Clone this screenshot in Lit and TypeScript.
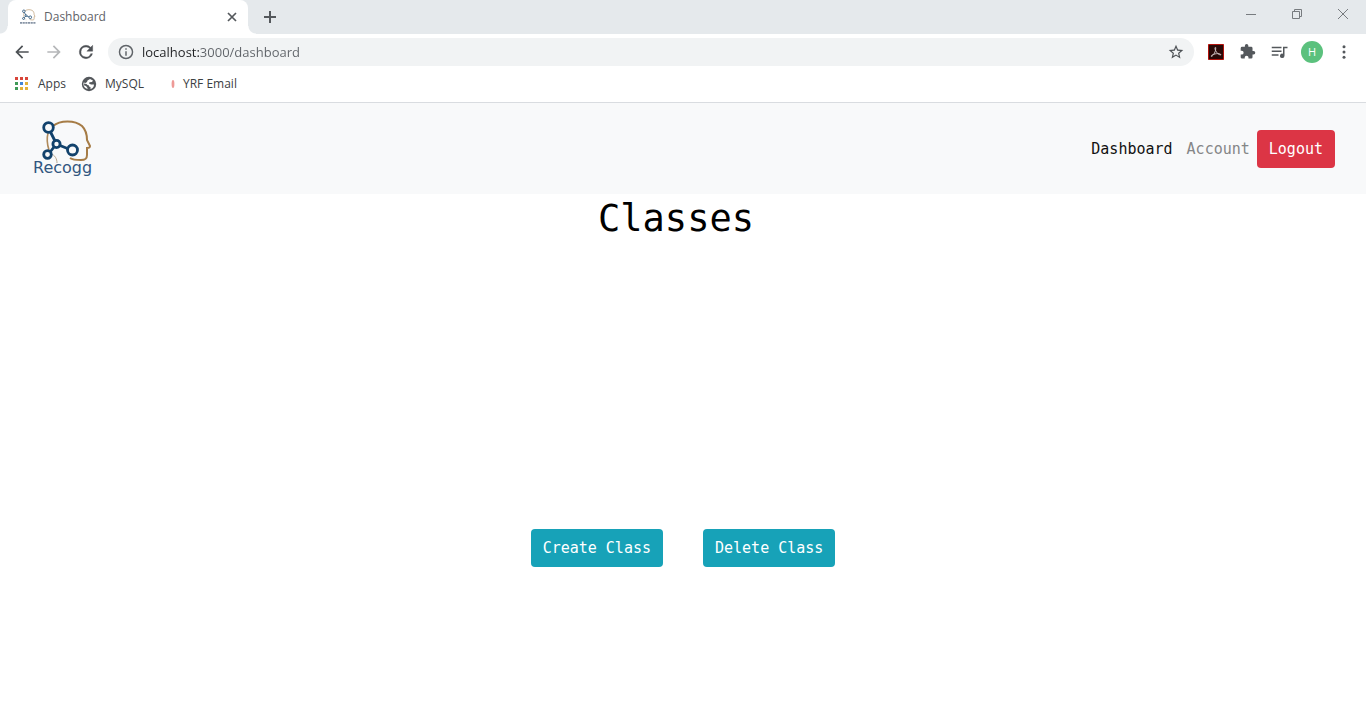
import { LitElement, html, css, svg } from "lit";
import { customElement, state } from "lit/decorators.js";

const mark = svg`
  <path d="M25 5 C32 -1 47 -1 54 5 C58 9 59 14 59 19 L62 25 C62 27 61 27 59 27 L59 34 C59 38 57 39 53 39 C49 39 45 39 42 37" fill="none" stroke="#a67c46" stroke-width="2"/>
  <path d="M20 12 C18.500 18 19 23 21 29" fill="none" stroke="#b08a5a" stroke-width="1.600"/>
  <path d="M23 33 C27 34 29 38 29 42" fill="none" stroke="#b9a68c" stroke-width="1"/>
  <g fill="none" stroke="#12426c" stroke-width="2.800">
    <path d="M22.500 11 L27 20 M32 24.500 L39.500 27.500 M26 26 L22.500 30.500"/>
    <circle cx="20.500" cy="6.500" r="4.800"/>
    <circle cx="28.500" cy="23" r="3.600"/>
    <circle cx="44.500" cy="29" r="5"/>
    <circle cx="19.500" cy="33.500" r="3.800"/>
  </g>`;

@customElement("browser-tabs")
class BrowserTabs extends LitElement {
  static styles = css`
    :host { display: block; }
    .strip { display: flex; align-items: stretch; height: 34px; background: #e5e9ec; padding-left: 8px; }
    .tab { position: relative; box-sizing: border-box; width: 240px; display: flex; align-items: center; gap: 8px; padding: 0 10px 0 12px; background: #fff; border-radius: 8px 8px 0 0; }
    .tab::before, .tab::after { content: ""; position: absolute; bottom: 0; width: 8px; height: 8px; }
    .tab::before { left: -8px; background: radial-gradient(circle at 0 0, #e5e9ec 7px, #fff 8px); }
    .tab::after { right: -8px; background: radial-gradient(circle at 100% 0, #e5e9ec 7px, #fff 8px); }
    .title { flex: 1; font: 12px/16px "Open Sans", sans-serif; color: #5f6368; }
    button { border: 0; padding: 0; background: none; display: grid; place-items: center; }
    svg { display: block; }
    .close { width: 12px; height: 12px; }
    .new { width: 44px; }
    .window { margin-left: auto; display: flex; height: 28px; }
    .window button { width: 46px; }
  `;

  render() {
    return html`
      <div class="strip">
        <div class="tab">
          <svg width="16" height="16" viewBox="6 -2 60 60" aria-hidden="true">${mark}
            <path d="M6 50 H66" stroke="#8794a5" stroke-width="7" stroke-dasharray="8 2"/>
          </svg>
          <span class="title">Dashboard</span>
          <button class="close" aria-label="Close tab">
            <svg width="12" height="12" viewBox="0 0 12 12"><path d="M2 2 L10 10 M10 2 L2 10" stroke="#54585c" stroke-width="1.700"/></svg>
          </button>
        </div>
        <button class="new" aria-label="New tab">
          <svg width="12" height="12" viewBox="0 0 12 12"><path d="M6 0 V12 M0 6 H12" stroke="#54585c" stroke-width="2"/></svg>
        </button>
        <div class="window">
          <button aria-label="Minimize"><svg width="10" height="10"><path d="M0 5.500 H10" stroke="#777b7f"/></svg></button>
          <button aria-label="Restore"><svg width="10" height="10" fill="none" stroke="#777b7f"><path d="M.5 2.500 H7.500 V9.500 H.5 Z M2.500 2.500 V.5 H9.500 V7.500 H7.500"/></svg></button>
          <button aria-label="Close"><svg width="10" height="10"><path d="M0 0 L10 10 M10 0 L0 10" stroke="#777b7f"/></svg></button>
        </div>
      </div>`;
  }
}

@customElement("browser-toolbar")
class BrowserToolbar extends LitElement {
  static styles = css`
    :host { display: block; }
    .bar { display: flex; align-items: center; height: 36px; padding: 0 12px; }
    button { border: 0; padding: 0; background: none; display: grid; place-items: center; width: 32px; height: 32px; flex: none; }
    svg { display: block; }
    .history { display: flex; margin-left: -6px; margin-right: 6px; }
    .address { flex: 1; display: flex; align-items: center; gap: 8px; height: 28px; border-radius: 14px; background: #f1f3f4; padding: 0 2px 0 10px; }
    .url { flex: 1; min-width: 0; border: 0; outline: 0; padding: 0; height: 24px; font: 13px/24px "Open Sans", sans-serif; color: transparent; background: linear-gradient(to right, #202124 58px, #5f6368 58px); -webkit-background-clip: text; background-clip: text; }
    .url:focus { background: none; color: #202124; }
    .address button { height: 28px; }
    .extensions { display: flex; margin-left: 6px; margin-right: -6px; }
    .avatar { display: grid; place-items: center; width: 22px; height: 22px; border-radius: 50%; background: #5bc17d; color: #fff; font: 11px/22px "Open Sans", sans-serif; }
  `;

  render() {
    return html`
      <div class="bar">
        <div class="history">
          <button aria-label="Back"><svg width="20" height="20" viewBox="0 0 24 24" fill="#4d5155"><path d="M20 11H7.830l5.590-5.590L12 4l-8 8 8 8 1.410-1.410L7.830 13H20v-2z"/></svg></button>
          <button aria-label="Forward"><svg width="20" height="20" viewBox="0 0 24 24" fill="#b5b7b9"><path d="M4 13h12.170l-5.590 5.590L12 20l8-8-8-8-1.410 1.410L16.170 11H4v2z"/></svg></button>
          <button aria-label="Reload"><svg width="20" height="20" viewBox="0 0 24 24" fill="#4d5155" stroke="#4d5155" stroke-width=".5"><path d="M17.650 6.350A7.958 7.958 0 0 0 12 4a8 8 0 1 0 7.730 10h-2.080A6 6 0 1 1 12 6c1.660 0 3.140.69 4.220 1.780L13 11h7V4l-2.350 2.350z"/></svg></button>
        </div>
        <div class="address">
          <svg width="16" height="16" viewBox="1 1 22 22" fill="#5f6368" aria-hidden="true"><path d="M11 17h2v-6h-2v6zm1-15a10 10 0 1 0 0 20 10 10 0 0 0 0-20zm0 18a8 8 0 1 1 0-16 8 8 0 0 1 0 16zM11 9h2V7h-2v2z"/></svg>
          <input class="url" type="text" aria-label="Address" value="localhost:3000/dashboard" spellcheck="false">
          <button aria-label="Bookmark this tab"><svg width="16" height="16" viewBox="1 1 22 22" fill="#4d5155"><path d="M22 9.240l-7.190-.62L12 2 9.190 8.630 2 9.240l5.460 4.730L5.820 21 12 17.270 18.180 21l-1.630-7.030L22 9.240zM12 15.400l-3.760 2.270 1-4.280-3.320-2.880 4.380-.38L12 6.100l1.710 4.040 4.380.38-3.320 2.880 1 4.280L12 15.400z"/></svg></button>
        </div>
        <div class="extensions">
          <button aria-label="Acrobat"><svg width="16" height="16" viewBox="0 0 16 16"><path d="M.5 .5h15v15H.5z" fill="#290907" stroke="#b3120c"/><path d="M3.500 12.500 C5.500 11.500 8 7.500 7.700 3.500 C7 3 6.500 4.500 7.600 6.500 C8.700 8.800 10.500 10.800 12.800 11 C13.200 9.300 8 9 4 11 C3 11.800 3 12.300 3.500 12.500" fill="none" stroke="#d8cccc" stroke-width=".9"/></svg></button>
          <button aria-label="Extensions"><svg width="16" height="16" viewBox="1 1 23 23" fill="#54585c"><path d="M20.500 11H19V7a2 2 0 0 0-2-2h-4V3.500a2.500 2.500 0 0 0-5 0V5H4a2 2 0 0 0-1.990 2v3.800H3.500a2.700 2.700 0 0 1 0 5.400H2V20a2 2 0 0 0 2 2h3.800v-1.500a2.700 2.700 0 0 1 5.400 0V22H17a2 2 0 0 0 2-2v-4h1.500a2.500 2.500 0 0 0 0-5z"/></svg></button>
          <button aria-label="Media controls"><svg width="18" height="18" viewBox="1 0 24 24" fill="#54585c"><path d="M2 5h13v2H2zM2 10h13v2H2zM2 15h9v2H2zM17 5h6v2h-4v10a3 3 0 1 1-2-2.820z"/></svg></button>
          <button aria-label="Profile"><span class="avatar">H</span></button>
          <button aria-label="Menu"><svg width="18" height="18" viewBox="0 0 24 24" fill="#54585c"><circle cx="12" cy="5" r="2"/><circle cx="12" cy="12" r="2"/><circle cx="12" cy="19" r="2"/></svg></button>
        </div>
      </div>`;
  }
}

@customElement("bookmark-bar")
class BookmarkBar extends LitElement {
  static styles = css`
    :host { display: block; }
    .bar { display: flex; align-items: center; gap: 15px; box-sizing: border-box; height: 33px; padding: 0 15px 4px; border-bottom: 1px solid #d9dce0; }
    a { display: flex; align-items: center; gap: 8px; font: 12px/16px "Open Sans", sans-serif; color: #3c4043; text-decoration: none; }
    svg { display: block; }
  `;

  render() {
    const colors = ["#d8453a", "#d8453a", "#d8453a", "#3f9a57", "#4285d8", "#e3b13a", "#3f9a57", "#e3b13a", "#e3b13a"];
    return html`
      <nav class="bar" aria-label="Bookmarks">
        <a href="#apps"><svg width="15" height="14" viewBox="0 0 15 14" aria-hidden="true">${colors.map((c, i) => svg`<rect x=${(i % 3) * 5} y=${Math.floor(i / 3) * 5} width="3" height="3" fill=${c}/>`)}</svg>Apps</a>
        <a href="#mysql"><svg width="16" height="16" viewBox="0 0 16 16" aria-hidden="true"><circle cx="8" cy="8" r="7.200" fill="#54585c"/><path d="M9 3 L12 4.500 L11 6 L8.500 6.200 L8 7.500 L10 8.500 L13 8.500 C13 11 11.500 12.500 9.500 13 L9.500 11 L8 10.500 L8 9.500 L6.500 9 L5.500 8 L3 7.500 L3.200 9.500 L5 10 L6.500 12 L6.500 13 C4 12.500 2.500 10.500 2.400 8 L2.600 6.500 L4.500 7 L6 6 L6.500 4.500 Z" fill="#fff"/></svg>MySQL</a>
        <a href="#email"><svg width="16" height="16" viewBox="0 0 16 16" aria-hidden="true"><ellipse cx="14" cy="8" rx="1.400" ry="4" fill="#ee9a97"/></svg>YRF Email</a>
      </nav>`;
  }
}

@customElement("app-root")
class AppRoot extends LitElement {
  static styles = css`
    :host { display: block; min-height: 100vh; background: #fff; font: 15px/24px "DejaVu Sans Mono", monospace; color: #000; }
    .navbar { display: flex; align-items: center; justify-content: space-between; box-sizing: border-box; min-height: 91px; padding: 8px 31px 8px 28px; background: #f8f9fa; }
    .brand svg { display: block; }
    .brand text { font: 16px "DejaVu Sans", sans-serif; fill: #31567f; }
    .links { display: flex; align-items: center; }
    .link { padding: 8px 7px; color: #858687; text-decoration: none; }
    .active { color: #111; }
    .btn { border: 0; border-radius: 4px; padding: 7px 12px; font: inherit; color: #fff; cursor: pointer; }
    .danger { background: #dc3545; }
    .info { background: #17a2b8; }
    h1 { margin: 0; padding-right: 14px; text-align: center; font-size: 37px; line-height: 50px; font-weight: 400; }
    .actions { display: flex; justify-content: center; gap: 40px; margin-top: 285px; }
  `;

  @state() private current = "Dashboard";

  render() {
    return html`
      <browser-tabs></browser-tabs>
      <browser-toolbar></browser-toolbar>
      <bookmark-bar></bookmark-bar>
      <header class="navbar">
        <a class="brand" href="#home" aria-label="Recogg">
          <svg width="72" height="60" viewBox="0 -2 72 60">${mark}<text x="5" y="52">Recogg</text></svg>
        </a>
        <nav class="links">
          ${["Dashboard", "Account"].map((name) => html`<a class="link ${name === this.current ? "active" : ""}" href="#${name.toLowerCase()}" @click=${() => (this.current = name)}>${name}</a>`)}
          <button class="btn danger">Logout</button>
        </nav>
      </header>
      <main>
        <h1>Classes</h1>
        <div class="actions">
          <button class="btn info">Create Class</button>
          <button class="btn info">Delete Class</button>
        </div>
      </main>`;
  }
}
